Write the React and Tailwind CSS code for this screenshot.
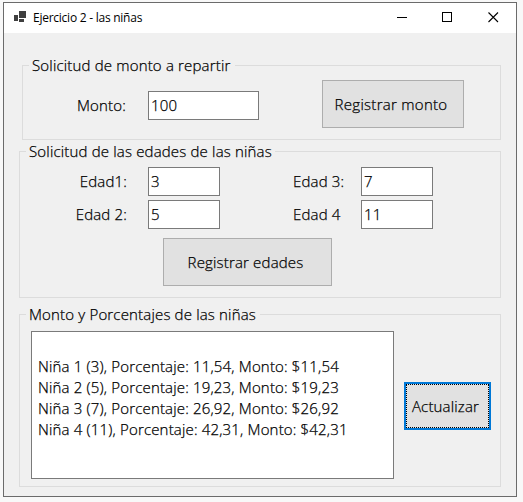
const group = "min-w-0 border border-[#dcdcdc]";

function Legend({ className, children }) {
  return <legend className={`ml-1.5 h-[21px] whitespace-nowrap pl-[3px] leading-[21px] ${className}`}>{children}</legend>;
}

function Field({ value, className }) {
  return (
    <div className={`h-[29px] shrink-0 border border-[#7a7a7a] bg-white pl-[2px] leading-[26px] ${className}`}>
      {value}
    </div>
  );
}

function Label({ children, className }) {
  return <span className={`shrink-0 whitespace-nowrap leading-[29px] ${className}`}>{children}</span>;
}

function Button({ children, className }) {
  return (
    <button className={`flex h-12 shrink-0 items-center justify-center whitespace-nowrap bg-[#e1e1e1] ${className}`}>
      {children}
    </button>
  );
}

function TitleBar() {
  return (
    <header className="flex h-[30px] items-center bg-white [-webkit-text-stroke:0]">
      <svg className="mb-px ml-[10px] mt-[-1px] shrink-0" width="12" height="12" viewBox="0 0 12 12" fill="#3f3f3f" shapeRendering="crispEdges">
        <rect x="5" y="0" width="7" height="7" />
        <rect x="0" y="4" width="4" height="6" />
        <rect x="5" y="8" width="5" height="3" />
      </svg>
      <h1 className="ml-[7px] flex-1 text-[12px] font-normal leading-[30px] tracking-[-0.25px]">Ejercicio 2 - las niñas</h1>
      <svg className="mb-px mr-4 shrink-0" width="103" height="12" viewBox="0 0 103 12" fill="none" stroke="#000">
        <path d="M0 5.5H10M45.5 .5H54.5V9.5H45.5Z" shapeRendering="crispEdges" />
        <path d="M91.5 .5L101 10M101 .5L91.5 10" strokeWidth="1.1" />
      </svg>
    </header>
  );
}

const results = [
  ["1 (3)", "11,54"],
  ["2 (5)", "19,23"],
  ["3 (7)", "26,92"],
  ["4 (11)", "42,31"],
];

export default function App() {
  return (
    <div className="h-[502px] w-[523px] bg-[#f8f8f8] pl-[3px] pt-[2px] font-['Open_Sans',sans-serif] text-[15px] font-light tracking-[0.17px] text-black [-webkit-text-stroke:0.25px_#000]">
      <main className="h-[495px] w-[514px] border border-[#6b6b6b] bg-[#f0f0f0]">
        <TitleBar />
        <div className="flex flex-col pt-[22px]">
          <fieldset className={`ml-[18px] h-[85px] w-[479px] ${group}`}>
            <Legend className="w-[206px]">Solicitud de monto a repartir</Legend>
            <div className="flex pt-1">
              <Label className="ml-[54px] mt-[11px] w-[71px]">Monto:</Label>
              <Field value="100" className="mt-[11px] w-[111px]" />
              <Button className="ml-[63px] w-[142px] border border-[#adadad] pr-1 tracking-[0.28px]">Registrar monto</Button>
            </div>
          </fieldset>
          <fieldset className={`ml-[15px] mt-px h-[157px] w-[482px] ${group}`}>
            <Legend className="w-[249px]">Solicitud de las edades de las niñas</Legend>
            <div className="flex pt-[5px]">
              <Label className="w-[128px] pr-[21px] text-right">Edad1:</Label>
              <Field value="3" className="w-[72px]" />
              <Label className="ml-[73px] w-[68px]">Edad 3:</Label>
              <Field value="7" className="w-[72px]" />
            </div>
            <div className="flex pt-1">
              <Label className="w-[128px] pr-[21px] text-right">Edad 2:</Label>
              <Field value="5" className="w-[72px]" />
              <Label className="ml-[73px] w-[68px]">Edad 4</Label>
              <Field value="11" className="w-[72px]" />
            </div>
            <Button className="ml-[143px] mt-[9px] w-[169px] border border-[#adadad] pr-1">Registrar edades</Button>
          </fieldset>
          <fieldset className={`ml-[15px] mt-[6px] h-[183px] w-[482px] ${group}`}>
            <Legend className="w-[234px]">Monto y Porcentajes de las niñas</Legend>
            <div className="flex pl-[11px] pt-[6px]">
              <div className="h-[148px] w-[363px] shrink-0 border border-[#7a7a7a] bg-white pl-[6px] pt-[24px] leading-[21px]">
                {results.map(([girl, amount]) => (
                  <p key={girl} className="whitespace-nowrap">
                    Niña {girl}, Porcentaje: {amount}, Monto: ${amount}
                  </p>
                ))}
              </div>
              <div className="ml-[10px] mt-[51px] h-12 w-[87px] border-2 border-[#0078d7]">
                <Button className="h-[44px] w-full border border-dotted border-black pr-1">Actualizar</Button>
              </div>
            </div>
          </fieldset>
        </div>
      </main>
    </div>
  );
}
